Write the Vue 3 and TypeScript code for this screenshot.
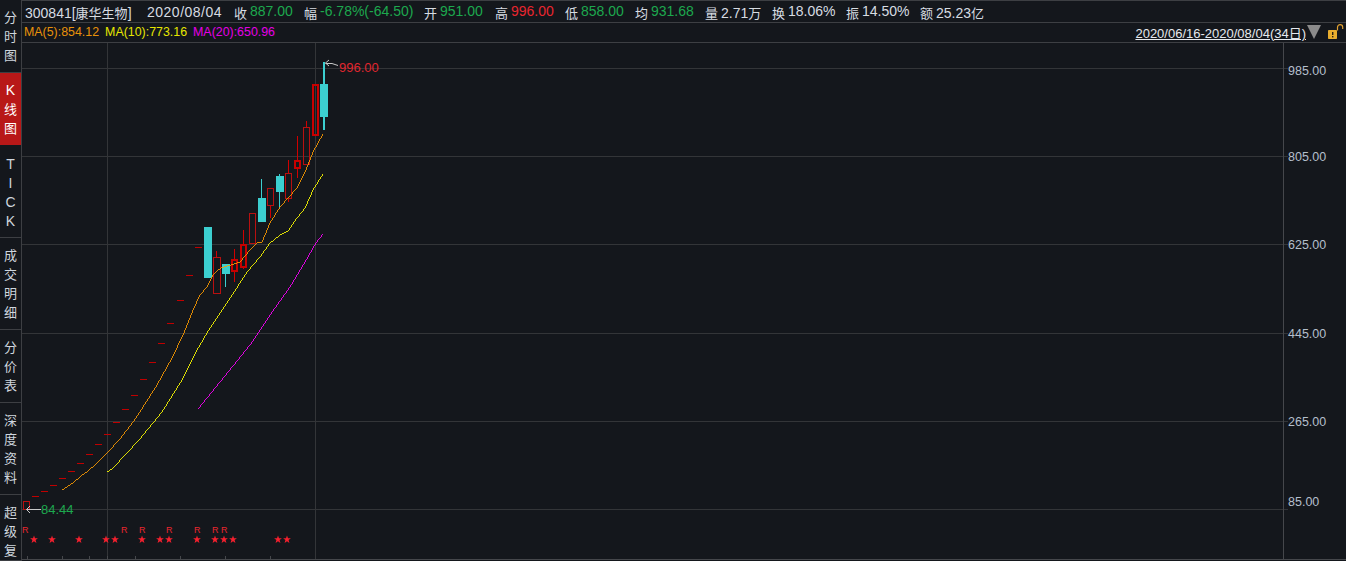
<script setup lang="ts">
interface Candle { l: number; r: number; t: number; b: number; wt?: number; wb?: number; up: boolean; sw?: number }

const tabs: { label: string[]; active?: boolean; h: number }[] = [
  { label: ['分', '时', '图'], h: 73 },
  { label: ['K', '线', '图'], active: true, h: 73 },
  { label: ['T', 'I', 'C', 'K'], h: 92 },
  { label: ['成', '交', '明', '细'], h: 92 },
  { label: ['分', '价', '表'], h: 73 },
  { label: ['深', '度', '资', '料'], h: 92 },
  { label: ['超', '级', '复'], h: 66 },
]
const isLatin = (ch: string) => /[A-Z]/.test(ch)
const isAllLatin = (label: string[]) => label.every(isLatin)

const stats: { k: string; v: string; u?: string; c: string; w: number }[] = [
  { k: '收', v: '887.00', c: 'green', w: 70 },
  { k: '幅', v: '-6.78%(-64.50)', c: 'green', w: 120 },
  { k: '开', v: '951.00', c: 'green', w: 71 },
  { k: '高', v: '996.00', c: 'red', w: 70 },
  { k: '低', v: '858.00', c: 'green', w: 70 },
  { k: '均', v: '931.68', c: 'green', w: 70 },
  { k: '量', v: '2.71', u: '万', c: 'plain', w: 67 },
  { k: '换', v: '18.06%', c: 'plain', w: 74 },
  { k: '振', v: '14.50%', c: 'plain', w: 74 },
  { k: '额', v: '25.23', u: '亿', c: 'plain', w: 70 },
]

const gridY = [68, 156, 244, 333, 421, 509]
const axis = [
  { y: 75, t: '985.00' },
  { y: 161, t: '805.00' },
  { y: 249, t: '625.00' },
  { y: 338, t: '445.00' },
  { y: 426, t: '265.00' },
  { y: 506, t: '85.00' },
]
const bottomTicks = [27, 62, 89, 107, 135, 180, 225, 270]

const dashes: [number, number][] = [
  [32, 496], [41, 491], [50, 485], [59, 478], [68, 471], [77, 463], [86, 454], [95, 444],
  [104, 434], [113, 422], [122, 409], [131, 395], [140, 379], [149, 362], [158, 343],
  [167, 323], [177, 300], [186, 275], [195, 247],
]

const candles: Candle[] = [
  { l: 23, r: 29, t: 501, b: 509, up: true },
  { l: 204, r: 211, t: 227, b: 278, up: false },
  { l: 213, r: 220, t: 257, b: 293, wt: 251, up: true },
  { l: 222, r: 229, t: 264, b: 274, wb: 287, up: false },
  { l: 231, r: 237, t: 259, b: 271, wt: 249, wb: 282, up: true, sw: 2 },
  { l: 240, r: 246, t: 244, b: 267, wt: 230, wb: 269, up: true, sw: 2 },
  { l: 249, r: 255, t: 213, b: 243, up: true },
  { l: 258, r: 265, t: 198, b: 222, wt: 179, up: false },
  { l: 267, r: 273, t: 188, b: 205, wb: 218, up: true },
  { l: 276, r: 283, t: 176, b: 192, wt: 174, wb: 209, up: false },
  { l: 285, r: 291, t: 173, b: 198, wt: 160, wb: 202, up: true },
  { l: 294, r: 300, t: 160, b: 168, wt: 136, wb: 178, up: true, sw: 2 },
  { l: 303, r: 309, t: 127, b: 164, wt: 121, up: true },
  { l: 312, r: 318, t: 84, b: 135, up: true, sw: 2 },
  { l: 320, r: 327, t: 84, b: 117, wt: 62, wb: 130, up: false },
]

const midX = (c: Candle) => Math.floor((c.l + c.r) / 2)

const ma5 = '62,490 73,483 81,476 88,471 97,463 107,453 120,439 133,422 143,407 157,385 172,358 183,335 193,310 200,295 207,287 213,275 217,271 221,268 240,262 250,250 257,243 262,242 270,223 280,207 288,198 297,188 305,172 313,152 323,134'
const ma10 = '107,472 113,468 139,440 162,412 182,380 197,350 210,328 220,313 229,300 247,272 260,257 270,243 280,235 288,231 297,218 305,208 313,190 323,174'
const ma20 = '198,409 220,382 250,345 270,315 290,287 305,262 316,243 323,234'

const rMarks = [22, 121, 139, 166, 194, 212, 221]
const stars = [34, 52, 79, 106, 115, 142, 160, 169, 197, 215, 224, 233, 278, 287]
const starPoints = '0,-3.9 1,-1.3 3.9,-1.3 1.6,0.5 2.4,3.4 0,1.7 -2.4,3.4 -1.6,0.5 -3.9,-1.3 -1,-1.3'
</script>

<template>
  <div class="app">
    <nav class="side">
      <div
        v-for="tab in tabs"
        :key="tab.label.join('')"
        class="tab"
        :class="{ active: tab.active, 'tab-latin': isAllLatin(tab.label) }"
        :style="{ height: tab.h + 'px' }"
      >
        <span v-for="ch in tab.label" :key="ch" :class="{ latin: isLatin(ch) }">{{ ch }}</span>
      </div>
    </nav>

    <main class="main">
      <header class="quote">
        <span class="code">300841[<span class="cjk">康华生物</span>]</span>
        <span class="date">2020/08/04</span>
        <span v-for="s in stats" :key="s.k" class="stat" :style="{ width: s.w + 'px' }">
          <span class="cjk">{{ s.k }}</span>
          <span :class="s.c">{{ s.v }}<span v-if="s.u" class="cjk">{{ s.u }}</span></span>
        </span>
      </header>

      <div class="ma-row">
        <span class="ma ma-a">MA(5):854.12</span>
        <span class="ma ma-b">MA(10):773.16</span>
        <span class="ma ma-c">MA(20):650.96</span>
        <span class="range">2020/06/16-2020/08/04(34日)</span>
        <svg class="tri" width="14" height="14" viewBox="0 0 14 14">
          <polygon points="0,0 14,0 7,14" fill="#8b8b8b" />
        </svg>
        <svg class="lock" width="16" height="16" viewBox="0 0 16 16">
          <path d="M9.5 6.5V3.2a2.6 2.6 0 0 1 5.2 0V5" fill="none" stroke="#e0a030" stroke-width="1.2" />
          <rect x="0" y="6" width="9" height="9" rx="0.8" fill="#e8ad2e" />
          <rect x="4" y="8" width="1.4" height="3" fill="#2a2013" />
          <rect x="4" y="12" width="1.4" height="1.4" fill="#2a2013" />
        </svg>
      </div>

      <svg class="chart" viewBox="22 43 1324 518" width="1324" height="518">
        <g class="crisp" stroke="#333538">
          <line v-for="y in gridY" :key="y" x1="22" :y1="y + 0.5" x2="1288" :y2="y + 0.5" />
          <line x1="107.5" y1="43" x2="107.5" y2="559" />
          <line x1="315.5" y1="43" x2="315.5" y2="559" />
        </g>
        <g class="crisp" stroke="#45474b">
          <line x1="1283.5" y1="43" x2="1283.5" y2="559" />
          <line x1="22" y1="559.5" x2="1346" y2="559.5" />
          <line v-for="x in bottomTicks" :key="x" :x1="x + 0.5" y1="556" :x2="x + 0.5" y2="559" />
        </g>

        <text v-for="a in axis" :key="a.t" class="axis" x="1288" :y="a.y">{{ a.t }}</text>

        <g class="crisp" stroke="#c00000">
          <line v-for="d in dashes" :key="d[0]" :x1="d[0]" :y1="d[1] + 0.5" :x2="d[0] + 7" :y2="d[1] + 0.5" />
        </g>

        <g v-for="c in candles" :key="c.l" class="crisp">
          <template v-if="c.up">
            <line v-if="c.wt" :x1="midX(c) + 0.5" :y1="c.wt" :x2="midX(c) + 0.5" :y2="c.t" stroke="#d00000" />
            <line v-if="c.wb" :x1="midX(c) + 0.5" :y1="c.b" :x2="midX(c) + 0.5" :y2="c.wb" stroke="#d00000" />
            <rect
              :x="c.l + (c.sw ?? 1) / 2"
              :y="c.t + (c.sw ?? 1) / 2"
              :width="c.r - c.l + 1 - (c.sw ?? 1)"
              :height="c.b - c.t + 1 - (c.sw ?? 1)"
              fill="none"
              :stroke="c.sw ? '#c80000' : '#b81010'"
              :stroke-width="c.sw ?? 1"
            />
          </template>
          <template v-else>
            <rect
              v-if="c.wt || c.wb"
              :x="midX(c)"
              :y="c.wt ?? c.t"
              :width="c.l === 320 ? 2 : 1"
              :height="(c.wb ?? c.b) - (c.wt ?? c.t)"
              fill="#3ccfd0"
            />
            <rect :x="c.l" :y="c.t" :width="c.r - c.l + 1" :height="c.b - c.t" fill="#3ccfd0" />
          </template>
        </g>

        <g class="crisp" fill="none" stroke-width="0.85">
          <polyline :points="ma5" stroke="#ff9c00" />
          <polyline :points="ma10" stroke="#ffff00" />
          <polyline :points="ma20" stroke="#ff00ff" />
        </g>

        <g class="arrow" fill="none" stroke="#c8c8c8">
          <path d="M329 60L325.5 63L329 66M325.5 63.5H332L338 65.5" />
          <path d="M30 506L26.5 509.5L30 513M26.5 509.5H41" />
        </g>
        <text class="tag red-fill" x="339" y="72">996.00</text>
        <text class="tag green-fill" x="41" y="514">84.44</text>

        <text v-for="x in rMarks" :key="x" class="rmark" :x="x" y="533">R</text>
        <polygon
          v-for="x in stars"
          :key="x"
          :points="starPoints"
          :transform="`translate(${x} 539.5)`"
          fill="#f5202e"
        />
      </svg>
    </main>
  </div>
</template>

<style scoped>
.app {
  display: flex;
  width: 1346px;
  height: 561px;
  overflow: hidden;
  background: #14171c;
  color: #d7dce2;
  font-family: "Liberation Sans", "Noto Sans CJK SC", sans-serif;
}
.side {
  flex: none;
  width: 21px;
  height: 561px;
  overflow: hidden;
  border-right: 1px solid #3d3f43;
}
.tab {
  box-sizing: border-box;
  display: flex;
  flex-direction: column;
  align-items: center;
  padding-top: 8px;
  border-bottom: 1px solid #3d3f43;
  font-size: 13px;
  line-height: 19px;
  color: #cfd6de;
}
.tab-latin {
  padding-top: 9px;
}
.latin {
  font-size: 14px;
}
.tab.active {
  background: #b81818;
  color: #fff;
  border-bottom-color: #14171c;
}
.main {
  flex: 1;
  min-width: 0;
  display: flex;
  flex-direction: column;
}
.quote {
  box-sizing: border-box;
  height: 23px;
  display: flex;
  align-items: center;
  padding: 1px 0 0 3px;
  border-top: 1px solid #3d3f43;
  border-bottom: 1px solid #3d3f43;
  font-size: 14px;
  white-space: nowrap;
}
.cjk {
  font-size: 13px;
}
.code {
  flex: none;
  width: 122px;
}
.date {
  flex: none;
  width: 87px;
  letter-spacing: 0.5px;
}
.stat {
  flex: none;
  display: flex;
  gap: 3px;
}
.green {
  color: #1da84e;
}
.red {
  color: #e8262f;
}
.plain {
  color: #d7dce2;
}
.ma-row {
  box-sizing: border-box;
  height: 20px;
  display: flex;
  align-items: center;
  padding: 0 0 1px 2px;
  border-bottom: 1px solid #3d3f43;
  font-size: 12.4px;
  white-space: nowrap;
}
.ma {
  margin-right: 6px;
}
.ma-a {
  color: #e8920a;
}
.ma-b {
  color: #e6e600;
}
.ma-c {
  color: #e600e6;
}
.range {
  margin-left: auto;
  font-size: 13px;
  color: #e6e9ee;
  text-decoration: underline;
}
.tri {
  flex: none;
  margin-left: 1px;
}
.lock {
  flex: none;
  margin: 0 2px 0 7px;
}
.chart {
  display: block;
  flex: none;
}
.crisp {
  shape-rendering: crispEdges;
}
.axis {
  font-size: 12.5px;
  fill: #b4bfcc;
}
.tag {
  font-size: 13px;
}
.red-fill {
  fill: #e0262e;
}
.green-fill {
  fill: #1da84e;
}
.rmark {
  font-size: 9px;
  fill: #e8262f;
}
</style>

<style>
html,
body {
  margin: 0;
  background: #14171c;
}
</style>
